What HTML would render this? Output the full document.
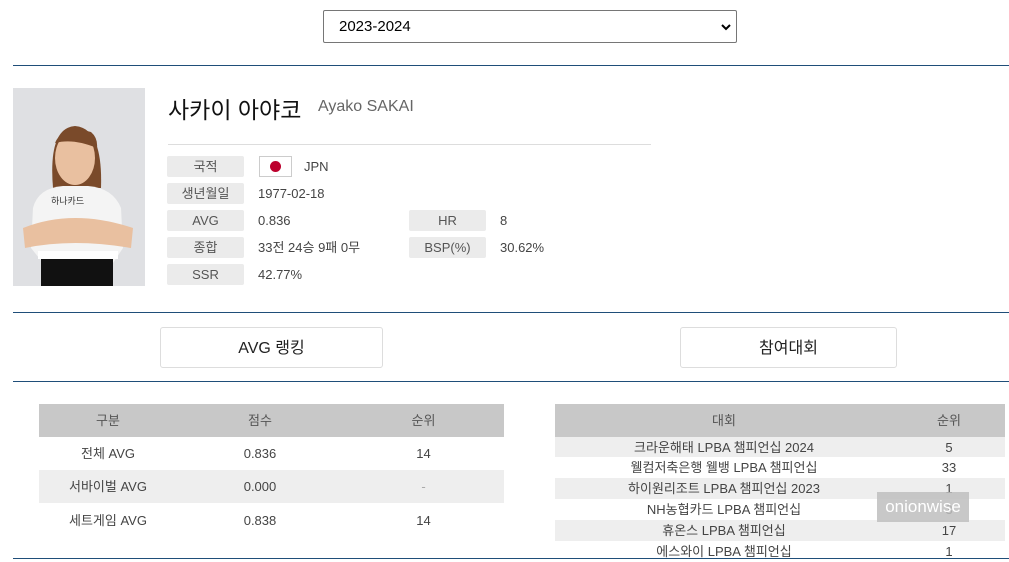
<!DOCTYPE html>
<html><head><meta charset="utf-8"><style>
*{margin:0;padding:0;box-sizing:border-box}
body{width:1009px;height:562px;background:#fff;font-family:"Liberation Sans","Noto Sans CJK KR",sans-serif;color:#333;position:relative;overflow:hidden}
.a{position:absolute}
.sel{left:323px;top:10px;width:414px;height:33px;border:1px solid #767676;border-radius:2px;font-size:15px;color:#000;padding:7px 0 0 15px}
.line{left:13px;width:996px;height:1px;background:#1f4e79}
.lab{width:77px;height:21px;background:#ebebeb;border-radius:2px;font-size:13px;color:#555;text-align:center;line-height:21px}
.val{font-size:13px;color:#444;line-height:21px}
.btn{height:41px;border:1px solid #ddd;border-radius:3px;font-size:16px;color:#222;text-align:center;line-height:41px}
table{border-collapse:collapse;position:absolute;font-size:13px;color:#444;table-layout:fixed}
td,th{text-align:center;font-weight:normal;padding:0;line-height:19px}
th{background:#c8c8c8;color:#555}
</style></head><body>
<div class="a sel">2023-2024<svg class="a" style="right:4px;top:11px" width="12" height="10" viewBox="0 0 12 10"><path d="M2 3 L6 7 L10 3" stroke="#000" stroke-width="2" fill="none"/></svg></div>
<div class="a line" style="top:65px"></div>
<svg class="a" style="left:13px;top:88px" width="132" height="198" viewBox="0 0 132 198">
<rect width="132" height="198" fill="#dfe0e3"/>
<path d="M40 100 Q35 40 62 38 Q90 40 88 100 Z" fill="#7a4a2a"/>
<ellipse cx="62" cy="70" rx="20" ry="27" fill="#e9c0a0"/>
<path d="M42 55 Q50 36 78 44 Q85 50 84 60 Q60 50 42 55Z" fill="#7a4a2a"/>
<path d="M20 120 Q25 100 50 98 L75 98 Q100 100 108 120 L110 160 L100 175 L30 175 L18 160Z" fill="#f4f4f4"/>
<path d="M10 140 Q60 120 120 140 L118 160 Q60 150 12 160Z" fill="#e9c0a0"/>
<rect x="25" y="163" width="80" height="8" fill="#fff"/>
<rect x="28" y="171" width="72" height="27" fill="#111"/>
<text x="38" y="116" font-size="9" fill="#333" font-family="Noto Sans CJK KR">하나카드</text>
</svg>
<div class="a" style="left:168px;top:91px;font-size:23px;color:#111">사카이 아야코</div>
<div class="a" style="left:318px;top:98px;font-size:16px;color:#666">Ayako SAKAI</div>
<div class="a" style="left:168px;top:144px;width:483px;height:1px;background:#ddd"></div>
<div class="a lab" style="left:167px;top:156px">국적</div>
<div class="a" style="left:259px;top:156px;width:33px;height:21px;border:1px solid #ccc;background:#fff"><div class="a" style="left:10px;top:4px;width:11px;height:11px;border-radius:50%;background:#bc002d"></div></div>
<div class="a val" style="left:304px;top:156px">JPN</div>
<div class="a lab" style="left:167px;top:183px">생년월일</div><div class="a val" style="left:258px;top:183px">1977-02-18</div>
<div class="a lab" style="left:167px;top:210px">AVG</div><div class="a val" style="left:258px;top:210px">0.836</div>
<div class="a lab" style="left:409px;top:210px">HR</div><div class="a val" style="left:500px;top:210px">8</div>
<div class="a lab" style="left:167px;top:237px">종합</div><div class="a val" style="left:258px;top:237px">33전 24승 9패 0무</div>
<div class="a lab" style="left:409px;top:237px">BSP(%)</div><div class="a val" style="left:500px;top:237px">30.62%</div>
<div class="a lab" style="left:167px;top:264px">SSR</div><div class="a val" style="left:258px;top:264px">42.77%</div>
<div class="a line" style="top:312px"></div>
<div class="a btn" style="left:160px;top:327px;width:223px">AVG 랭킹</div>
<div class="a btn" style="left:680px;top:327px;width:217px">참여대회</div>
<div class="a line" style="top:381px"></div>
<table style="left:39px;top:404px;width:465px">
<colgroup><col style="width:138px"><col style="width:166px"><col style="width:161px"></colgroup>
<tr style="height:33px"><th>구분</th><th>점수</th><th>순위</th></tr>
<tr style="height:33px"><td>전체 AVG</td><td>0.836</td><td>14</td></tr>
<tr style="height:33px;background:#eee"><td>서바이벌 AVG</td><td>0.000</td><td style="color:#aaa">-</td></tr>
<tr style="height:34px"><td>세트게임 AVG</td><td>0.838</td><td>14</td></tr>
</table>
<table style="left:555px;top:404px;width:450px">
<colgroup><col style="width:338px"><col style="width:112px"></colgroup>
<tr style="height:33px"><th>대회</th><th>순위</th></tr>
<tr style="height:20px;background:#eee"><td>크라운해태 LPBA 챔피언십 2024</td><td>5</td></tr>
<tr style="height:21px"><td>웰컴저축은행 웰뱅 LPBA 챔피언십</td><td>33</td></tr>
<tr style="height:21px;background:#eee"><td>하이원리조트 LPBA 챔피언십 2023</td><td>1</td></tr>
<tr style="height:21px"><td>NH농협카드 LPBA 챔피언십</td><td>3</td></tr>
<tr style="height:21px;background:#eee"><td>휴온스 LPBA 챔피언십</td><td>17</td></tr>
<tr style="height:21px"><td>에스와이 LPBA 챔피언십</td><td>1</td></tr>
</table>
<div class="a" style="left:877px;top:492px;width:92px;height:30px;background:rgba(190,190,190,0.85);color:#fff;font-size:17px;line-height:30px;text-align:center">onionwise</div>
<div class="a line" style="top:558px"></div>
</body></html>
